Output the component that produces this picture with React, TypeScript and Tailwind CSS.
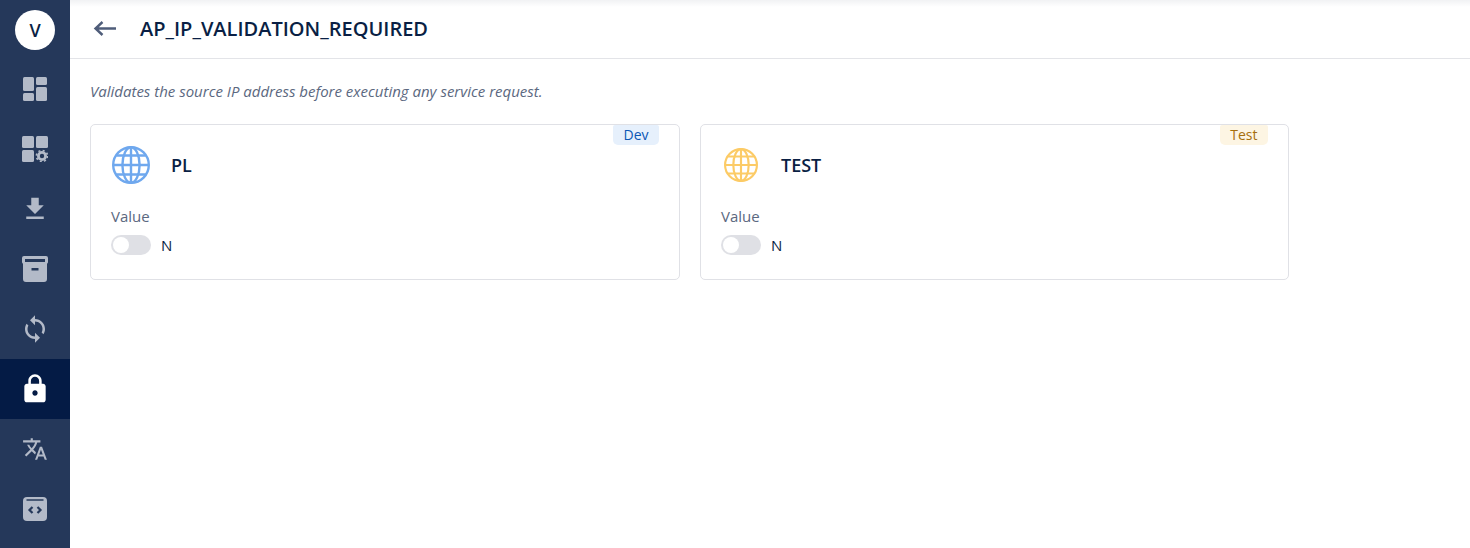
const ICON = "#b3bac8";

function Rail({ active, children }: { active?: boolean; children: React.ReactNode }) {
  return (
    <div className={active ? "flex h-[60px] w-full items-center justify-center bg-[#041b45]" : "flex h-[60px] w-full items-center justify-center"}>
      {children}
    </div>
  );
}

function Globe({ color, size }: { color: string; size: number }) {
  return (
    <svg width={size} height={size} viewBox="0 0 38 38" fill="none" stroke={color} strokeWidth="2.400">
      <circle cx="19" cy="19" r="17.800" />
      <ellipse cx="19" cy="19" rx="8.600" ry="17.800" />
      <path d="M19 1v36M1.200 19h35.600M4.200 9.500h29.600M4.200 28.500h29.600" />
    </svg>
  );
}

function Card({ name, badge, badgeClass, color, size, width }: { name: string; badge: string; badgeClass: string; color: string; size: number; width: string }) {
  return (
    <div className={"relative h-[156px] rounded-[5px] border border-[#e0e1e6] bg-white px-5 pt-5 " + width}>
      <span className={"absolute right-5 top-0 flex h-[20px] items-center rounded-b-[5px] rounded-t-[2px] px-[10.5px] text-sm font-medium " + badgeClass}>{badge}</span>
      <div className="flex h-10 items-center">
        <div className="flex w-10 justify-center"><Globe color={color} size={size} /></div>
        <span className="ml-5 text-lg font-semibold leading-[24px] text-[#0a1f44]">{name}</span>
      </div>
      <div className="mt-[21px] text-[15px] leading-[20px] text-[#5b6880]">Value</div>
      <div className="mt-[8px] flex items-center">
        <div className="flex h-5 w-10 items-center rounded-full bg-[#dfe0e5] pl-[2px]">
          <div className="h-4 w-4 rounded-full bg-white" />
        </div>
        <span className="ml-[10px] text-[15px] text-[#0a1f44]">N</span>
      </div>
    </div>
  );
}

export default function App() {
  return (
    <div className="flex h-[548px] w-[1470px] overflow-hidden bg-white font-['Open_Sans',sans-serif]">
      <aside className="flex h-full w-[70px] shrink-0 flex-col items-center bg-[#25385a]">
        <div className="flex h-[59px] w-full items-center justify-center">
          <div className="flex h-10 w-10 items-center justify-center rounded-full bg-white text-lg font-semibold text-[#0a1f44]">V</div>
        </div>
        <Rail>
          <svg width="24" height="24" viewBox="0 0 24 24" fill={ICON}>
            <rect x="0" y="0" width="11" height="14" rx="1.500" />
            <rect x="0" y="16" width="11" height="8" rx="1.500" />
            <rect x="13" y="0" width="11" height="8" rx="1.500" />
            <rect x="13" y="10" width="11" height="14" rx="1.500" />
          </svg>
        </Rail>
        <Rail>
          <svg width="26" height="26" viewBox="0 0 26 26" fill={ICON}>
            <rect x="0" y="0" width="12" height="12" rx="1.500" />
            <rect x="14" y="0" width="12" height="12" rx="1.500" />
            <rect x="0" y="14" width="12" height="12" rx="1.500" />
            <circle cx="20" cy="20" r="3.600" fill="none" stroke={ICON} strokeWidth="2.800" />
            <circle cx="20" cy="20" r="5.600" fill="none" stroke={ICON} strokeWidth="1.600" strokeDasharray="2 2.400" />
          </svg>
        </Rail>
        <Rail>
          <svg width="30" height="30" viewBox="0 0 24 24" fill={ICON}>
            <path d="M19 9h-4V3H9v6H5l7 7 7-7zM5 18v2h14v-2H5z" />
          </svg>
        </Rail>
        <Rail>
          <svg width="26" height="26" viewBox="0 0 26 26">
            <path fill={ICON} d="M2 0h22a2 2 0 0 1 2 2v4a2 2 0 0 1-1 1.700V23a3 3 0 0 1-3 3H4a3 3 0 0 1-3-3V7.700A2 2 0 0 1 0 6V2a2 2 0 0 1 2-2z" />
            <path fill="#25385a" d="M3 3h20v3H3zM9.500 12h7v2.500h-7z" />
          </svg>
        </Rail>
        <Rail>
          <svg width="30" height="30" viewBox="0 0 24 24" fill={ICON}>
            <path d="M12 4V1L8 5l4 4V6c3.310 0 6 2.690 6 6 0 1.010-.25 1.970-.7 2.800l1.460 1.460C19.540 15.030 20 13.570 20 12c0-4.420-3.580-8-8-8zm0 14c-3.310 0-6-2.690-6-6 0-1.010.25-1.970.7-2.800L5.240 7.740C4.460 8.970 4 10.430 4 12c0 4.420 3.580 8 8 8v3l4-4-4-4v3z" />
          </svg>
        </Rail>
        <Rail active>
          <svg width="32" height="32" viewBox="0 0 24 24" fill="#ffffff">
            <path d="M18 8h-1V6c0-2.760-2.240-5-5-5S7 3.240 7 6v2H6c-1.100 0-2 .9-2 2v10c0 1.100.9 2 2 2h12c1.100 0 2-.9 2-2V10c0-1.100-.9-2-2-2zm-6 9c-1.100 0-2-.9-2-2s.9-2 2-2 2 .9 2 2-.9 2-2 2zm3.100-9H8.900V6c0-1.710 1.390-3.100 3.100-3.100 1.710 0 3.100 1.390 3.100 3.100v2z" />
          </svg>
        </Rail>
        <Rail>
          <svg width="26" height="26" viewBox="0 0 24 24" fill={ICON}>
            <path d="M12.870 15.070l-2.540-2.510.03-.03c1.740-1.940 2.980-4.170 3.710-6.530H17V4h-7V2H8v2H1v1.990h11.170C11.500 7.920 10.440 9.750 9 11.350 8.070 10.320 7.300 9.190 6.690 8h-2c.73 1.630 1.730 3.170 2.980 4.560l-5.090 5.020L4 19l5-5 3.110 3.110.76-2.040zM18.500 10h-2L12 22h2l1.120-3h4.750L21 22h2l-4.500-12zm-2.620 7l1.620-4.330L19.120 17h-3.240z" />
          </svg>
        </Rail>
        <Rail>
          <svg width="24" height="24" viewBox="0 0 24 24">
            <rect width="24" height="24" rx="4" fill={ICON} />
            <path d="M3.500 3h17" stroke="#25385a" strokeWidth="1.500" />
            <path d="M9.500 10l-3 3 3 3M14.500 10l3 3-3 3" stroke="#25385a" strokeWidth="2.200" fill="none" />
          </svg>
        </Rail>
      </aside>
      <main className="flex min-w-0 flex-1 flex-col">
        <header className="flex h-[59px] shrink-0 items-center border-b border-[#e3e4e8] bg-gradient-to-b from-[#f1f2f4] from-0% to-white to-[12%] pl-5">
          <svg width="30" height="30" viewBox="0 0 30 30" fill="none" stroke="#4f5d7a" strokeWidth="2.400">
            <path d="M26 14.500H6M12.500 8l-7 6.500 7 6.500" />
          </svg>
          <h1 className="ml-5 text-xl font-semibold text-[#0a1f44]">AP_IP_VALIDATION_REQUIRED</h1>
        </header>
        <div className="px-5 pt-[22px]">
          <p className="text-[15px] italic leading-[20px] text-[#5b6880]">Validates the source IP address before executing any service request.</p>
          <div className="mt-[23px] flex gap-5">
            <Card name="PL" badge="Dev" badgeClass="bg-[#e6f0fc] text-[#0b57b5]" color="#6fa8ee" size={38} width="w-[590px]" />
            <Card name="TEST" badge="Test" badgeClass="bg-[#fdf5e3] text-[#a66f0c]" color="#fccb66" size={34} width="w-[589px]" />
          </div>
        </div>
      </main>
    </div>
  );
}
